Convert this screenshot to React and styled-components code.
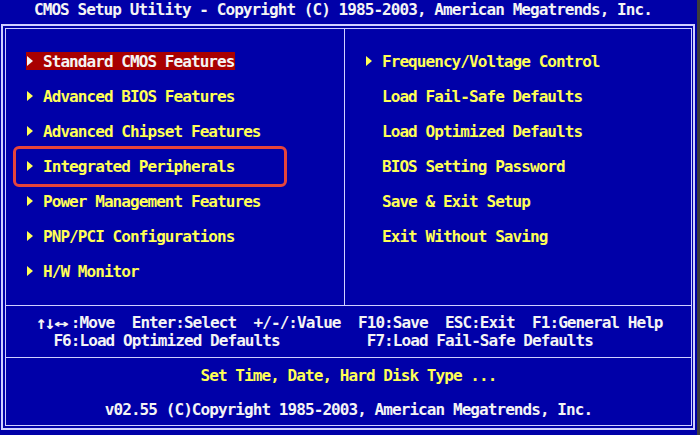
import React from "react";
import styled, { createGlobalStyle } from "styled-components";

const Global = createGlobalStyle`
  html, body { margin: 0; padding: 0; background: #3c3c3c; }
  body { font-family: "DejaVu Sans Mono", "Liberation Mono", monospace; }
`;

const BLUE = "#0000a8";
const LINE = "#cfcfff";
const YELLOW = "#ffff55";
const WHITE = "#f4f4f4";

const Screen = styled.div`
  position: relative;
  width: 700px;
  height: 435px;
  display: flex;
  background: #3c3c3c;
  overflow: hidden;
`;

const Main = styled.div`
  width: 697px;
  height: 435px;
  background: ${BLUE};
  display: flex;
  flex-direction: column;
`;

const Text = styled.span`
  font-family: "DejaVu Sans Mono", "Liberation Mono", monospace;
  font-weight: bold;
  font-size: 16px;
  letter-spacing: -0.93px;
  white-space: pre;
  color: ${(p) => p.$color || WHITE};
`;

const Title = styled.div`
  height: 24px;
  line-height: 20px;
  padding-left: 34px;
  display: flex;
  align-items: flex-start;
`;

const FrameOuter = styled.div`
  margin: 0 2px 5px 1px;
  border: 2px solid ${LINE};
  padding: 2px;
  flex: 1;
  display: flex;
`;

const FrameInner = styled.div`
  border: 1px solid ${LINE};
  flex: 1;
  display: flex;
  flex-direction: column;
`;

const MenuArea = styled.div`
  height: 276px;
  display: flex;
  border-bottom: 1px solid ${LINE};
`;

const Column = styled.div`
  display: flex;
  flex-direction: column;
  gap: 17px;
  padding: 23px 0 0 ${(p) => p.$pad}px;
  width: ${(p) => p.$width}px;
  box-sizing: border-box;
  border-right: ${(p) => (p.$divider ? `1px solid ${LINE}` : "none")};
`;

const Item = styled.div`
  align-self: flex-start;
  height: 18px;
  display: flex;
  align-items: center;
  gap: 10px;
  padding: 0 1px;
  background: ${(p) => (p.$active ? "#a80000" : "transparent")};
`;

const Arrow = styled.svg`
  width: 6px;
  height: 10px;
  visibility: ${(p) => (p.$hidden ? "hidden" : "visible")};
  flex-shrink: 0;
`;

const Help = styled.div`
  height: 52px;
  box-sizing: border-box;
  padding: 8px 0 0 30px;
  border-bottom: 1px solid ${LINE};
  display: flex;
  flex-direction: column;
`;

const HelpLine = styled.div`
  height: 18px;
  line-height: 18px;
  display: flex;
  align-items: center;
`;

const UpDown = styled.span`
  display: inline-block;
  width: 17.4px;
  font-family: "DejaVu Sans Mono", monospace;
  font-weight: bold;
  font-size: 18px;
  letter-spacing: -2.14px;
  line-height: 18px;
  white-space: pre;
  color: ${WHITE};
`;

const LeftRight = styled.span`
  display: inline-block;
  width: 17.4px;
  text-align: center;
  font-family: "DejaVu Sans Mono", monospace;
  font-weight: bold;
  font-size: 14.4px;
  line-height: 18px;
  color: ${WHITE};
  transform: scaleX(1.7);
`;

const Footer = styled.div`
  flex: 1;
  display: flex;
  flex-direction: column;
  align-items: center;
  padding-top: 9px;
  gap: 16px;
`;

const FooterLine = styled.div`
  height: 18px;
  line-height: 18px;
`;

const Callout = styled.div`
  position: absolute;
  left: 13px;
  top: 146px;
  width: 274px;
  height: 41px;
  box-sizing: border-box;
  border: 3px solid #e5453c;
  border-radius: 6px;
  pointer-events: none;
`;

const Tri = ({ color, hidden }) => (
  <Arrow viewBox="0 0 6 10" $hidden={hidden}>
    <polygon points="0,0 6,5 0,10" fill={color} />
  </Arrow>
);

const left = [
  "Standard CMOS Features",
  "Advanced BIOS Features",
  "Advanced Chipset Features",
  "Integrated Peripherals",
  "Power Management Features",
  "PNP/PCI Configurations",
  "H/W Monitor",
];

const right = [
  ["Frequency/Voltage Control", true],
  ["Load Fail-Safe Defaults", false],
  ["Load Optimized Defaults", false],
  ["BIOS Setting Password", false],
  ["Save & Exit Setup", false],
  ["Exit Without Saving", false],
];

export default function App() {
  return (
    <>
      <Global />
      <Screen>
        <Main>
          <Title>
            <Text>CMOS Setup Utility - Copyright (C) 1985-2003, American Megatrends, Inc.</Text>
          </Title>
          <FrameOuter>
            <FrameInner>
              <MenuArea>
                <Column $width={339} $pad={20} $divider>
                  {left.map((label, i) => (
                    <Item key={label} $active={i === 0}>
                      <Tri color={i === 0 ? WHITE : YELLOW} />
                      <Text $color={i === 0 ? WHITE : YELLOW}>{label}</Text>
                    </Item>
                  ))}
                </Column>
                <Column $width={346} $pad={20}>
                  {right.map(([label, arrow]) => (
                    <Item key={label}>
                      <Tri color={YELLOW} hidden={!arrow} />
                      <Text $color={YELLOW}>{label}</Text>
                    </Item>
                  ))}
                </Column>
              </MenuArea>
              <Help>
                <HelpLine>
                  <UpDown>↑↓</UpDown>
                  <LeftRight>↔</LeftRight>
                  <Text>:Move  Enter:Select  +/-/:Value  F10:Save  ESC:Exit  F1:General Help</Text>
                </HelpLine>
                <HelpLine>
                  <Text>  F6:Load Optimized Defaults          F7:Load Fail-Safe Defaults</Text>
                </HelpLine>
              </Help>
              <Footer>
                <FooterLine>
                  <Text $color={YELLOW}>Set Time, Date, Hard Disk Type ...</Text>
                </FooterLine>
                <FooterLine>
                  <Text>v02.55 (C)Copyright 1985-2003, American Megatrends, Inc.</Text>
                </FooterLine>
              </Footer>
            </FrameInner>
          </FrameOuter>
        </Main>
        <Callout />
      </Screen>
    </>
  );
}
